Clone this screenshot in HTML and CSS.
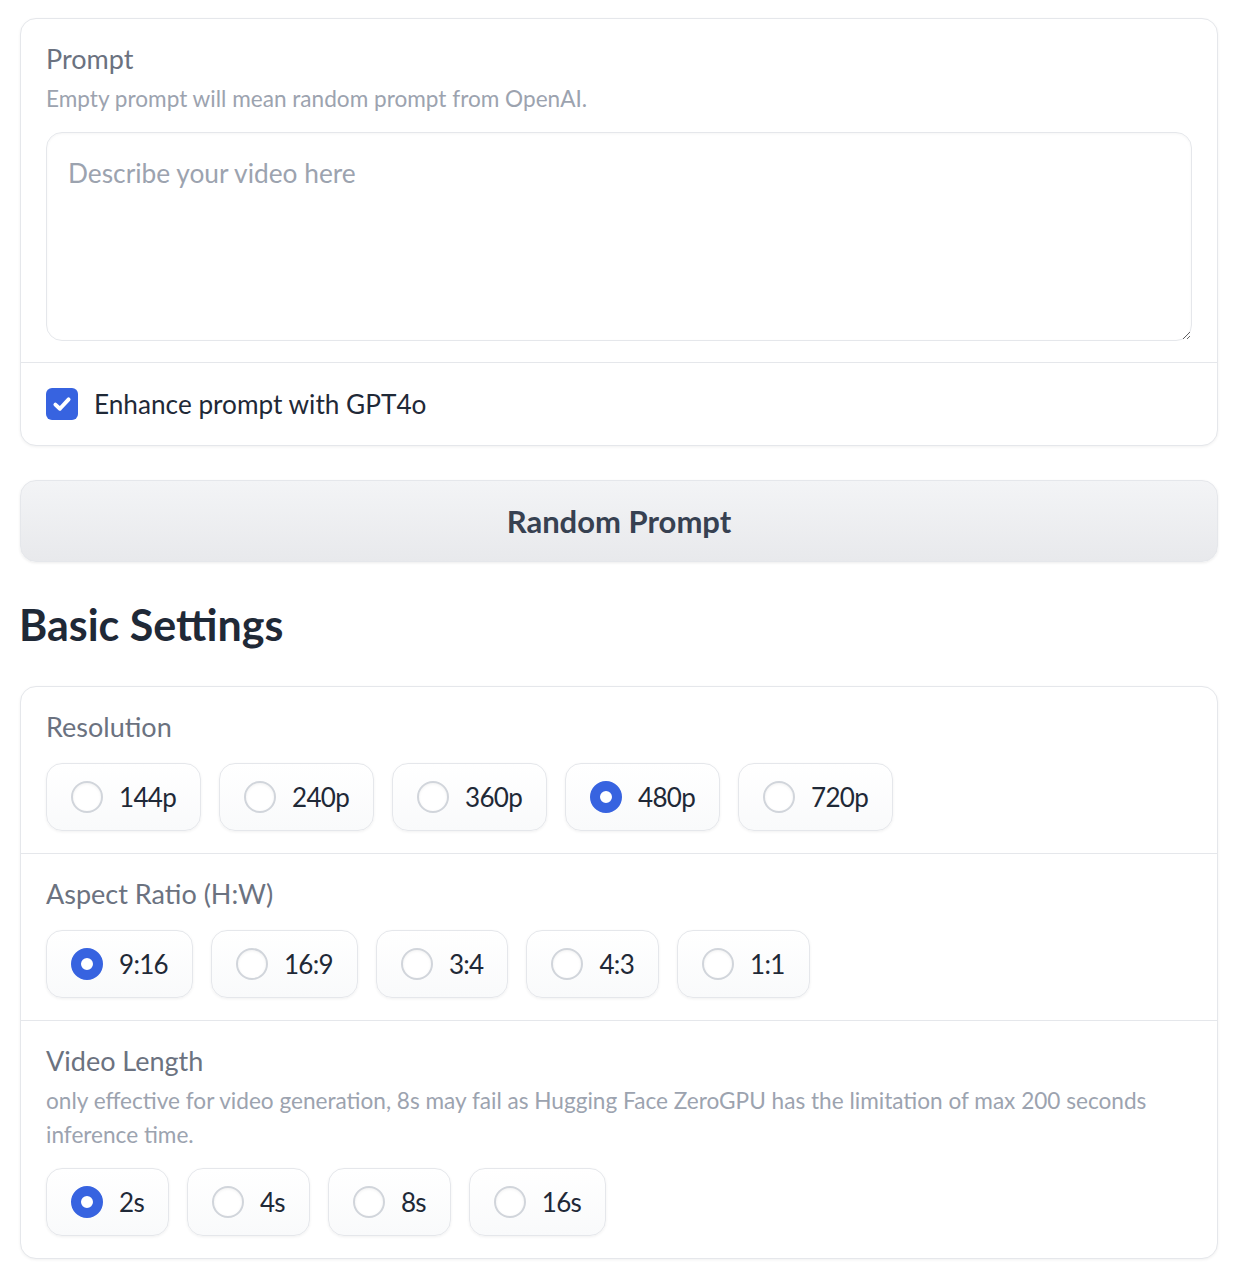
FILE: index.html
```html
<!DOCTYPE html>
<html lang="en">
<head>
<meta charset="utf-8">
<title>Video Settings</title>
<link rel="stylesheet" href="styles.css">
</head>
<body>
<div class="page">
  <div class="card">
    <div class="section prompt-section">
      <div class="label">Prompt</div>
      <div class="info">Empty prompt will mean random prompt from OpenAI.</div>
      <textarea class="textarea" placeholder="Describe your video here"></textarea>
    </div>
    <div class="section check-section">
      <label class="check">
        <span class="checkbox">
          <svg viewBox="0 0 16 16" width="24" height="24"><path d="M3.6 8.4 L6.6 11.2 L12.4 4.9" fill="none" stroke="#fff" stroke-width="2.6" stroke-linecap="round" stroke-linejoin="round"/></svg>
        </span>
        <span class="check-text">Enhance prompt with GPT4o</span>
      </label>
    </div>
  </div>

  <button class="btn">Random Prompt</button>

  <h2 class="heading">Basic Settings</h2>

  <div class="card">
    <div class="section">
      <div class="label">Resolution</div>
      <div class="radios">
        <div class="radio"><span class="dot"></span><span class="rtext">144p</span></div>
        <div class="radio"><span class="dot"></span><span class="rtext">240p</span></div>
        <div class="radio"><span class="dot"></span><span class="rtext">360p</span></div>
        <div class="radio"><span class="dot on"></span><span class="rtext">480p</span></div>
        <div class="radio"><span class="dot"></span><span class="rtext">720p</span></div>
      </div>
    </div>
    <div class="section">
      <div class="label">Aspect Ratio (H:W)</div>
      <div class="radios">
        <div class="radio"><span class="dot on"></span><span class="rtext">9:16</span></div>
        <div class="radio"><span class="dot"></span><span class="rtext">16:9</span></div>
        <div class="radio"><span class="dot"></span><span class="rtext">3:4</span></div>
        <div class="radio"><span class="dot"></span><span class="rtext">4:3</span></div>
        <div class="radio"><span class="dot"></span><span class="rtext">1:1</span></div>
      </div>
    </div>
    <div class="section">
      <div class="label">Video Length</div>
      <div class="info">only effective for video generation, 8s may fail as Hugging Face ZeroGPU has the limitation of max 200 seconds inference time.</div>
      <div class="radios">
        <div class="radio"><span class="dot on"></span><span class="rtext">2s</span></div>
        <div class="radio"><span class="dot"></span><span class="rtext">4s</span></div>
        <div class="radio"><span class="dot"></span><span class="rtext">8s</span></div>
        <div class="radio"><span class="dot"></span><span class="rtext">16s</span></div>
      </div>
    </div>
  </div>
</div>
</body>
</html>
```

FILE: styles.css
```css
* { box-sizing: border-box; }
html, body { margin: 0; padding: 0; background: #fff; }
body {
  font-family: Lato, "Noto Sans", sans-serif;
  color: #1f2937;
}
.page {
  padding: 18px 18px 12px 20px;
  display: flex;
  flex-direction: column;
}
.card {
  border: 1px solid #e5e7eb;
  border-radius: 16px;
  background: #fff;
  box-shadow: 0 1px 3px rgba(0,0,0,0.06);
  overflow: hidden;
}
.section {
  padding: 22px 25px 22px 25px;
  border-top: 1px solid #e5e7eb;
  display: flex;
  flex-direction: column;
}
.section:first-child { border-top: none; }
.label {
  font-size: 27px;
  line-height: 36px;
  color: #6b7280;
  margin-bottom: 18px;
}
.label + .info { margin-top: -13px; }
.info {
  font-size: 22.6px;
  line-height: 34px;
  color: #9ca3af;
  margin-bottom: 16px;
}
.prompt-section { padding-bottom: 21px; }
.textarea {
  display: block;
  width: 100%;
  height: 209px;
  border: 1px solid #e5e7eb;
  border-radius: 16px;
  padding: 22px 21px;
  font-family: Lato, "Noto Sans", sans-serif;
  font-size: 26.3px;
  line-height: 36px;
  color: #1f2937;
  box-shadow: inset 0 1px 3px rgba(0,0,0,0.04);
  outline: none;
  resize: vertical;
}
.textarea::placeholder { color: #9ca3af; }
.check-section {
  padding-top: 25px;
  padding-bottom: 25px;
}
.check {
  display: flex;
  align-items: center;
  gap: 16px;
  height: 32px;
}
.checkbox {
  width: 32px;
  height: 32px;
  border-radius: 6px;
  background: #3763e0;
  display: flex;
  align-items: center;
  justify-content: center;
}
.check-text {
  font-size: 26.2px;
  color: #1f2937;
}
.btn {
  margin-top: 34px;
  height: 82px;
  border: 1px solid #e5e7eb;
  border-radius: 16px;
  background: linear-gradient(to bottom, #f3f4f6, #e8e9ec);
  box-shadow: 0 1px 3px rgba(0,0,0,0.08);
  font-family: Lato, "Noto Sans", sans-serif;
  font-weight: 700;
  font-size: 31px;
  color: #374151;
}
.heading {
  margin: 38px 0 36px -1px;
  font-size: 43px;
  line-height: 50px;
  font-weight: 700;
  color: #1f2937;
}
.radios {
  display: flex;
  gap: 18px;
}
.radio {
  height: 68px;
  display: flex;
  align-items: center;
  gap: 16px;
  padding: 0 24px;
  border: 1px solid #e5e7eb;
  border-radius: 16px;
  background: linear-gradient(to bottom, #ffffff, #f9fafb);
  box-shadow: 0 1px 3px rgba(0,0,0,0.06);
}
.dot {
  width: 32px;
  height: 32px;
  border-radius: 50%;
  border: 2px solid #d1d5db;
  background: #fff;
  box-shadow: inset 0 1px 3px rgba(0,0,0,0.06);
  flex: none;
}
.dot.on {
  border: 10px solid #3763e0;
  box-shadow: none;
}
.rtext {
  font-size: 26px;
  letter-spacing: -0.7px;
  color: #1f2937;
}
```
